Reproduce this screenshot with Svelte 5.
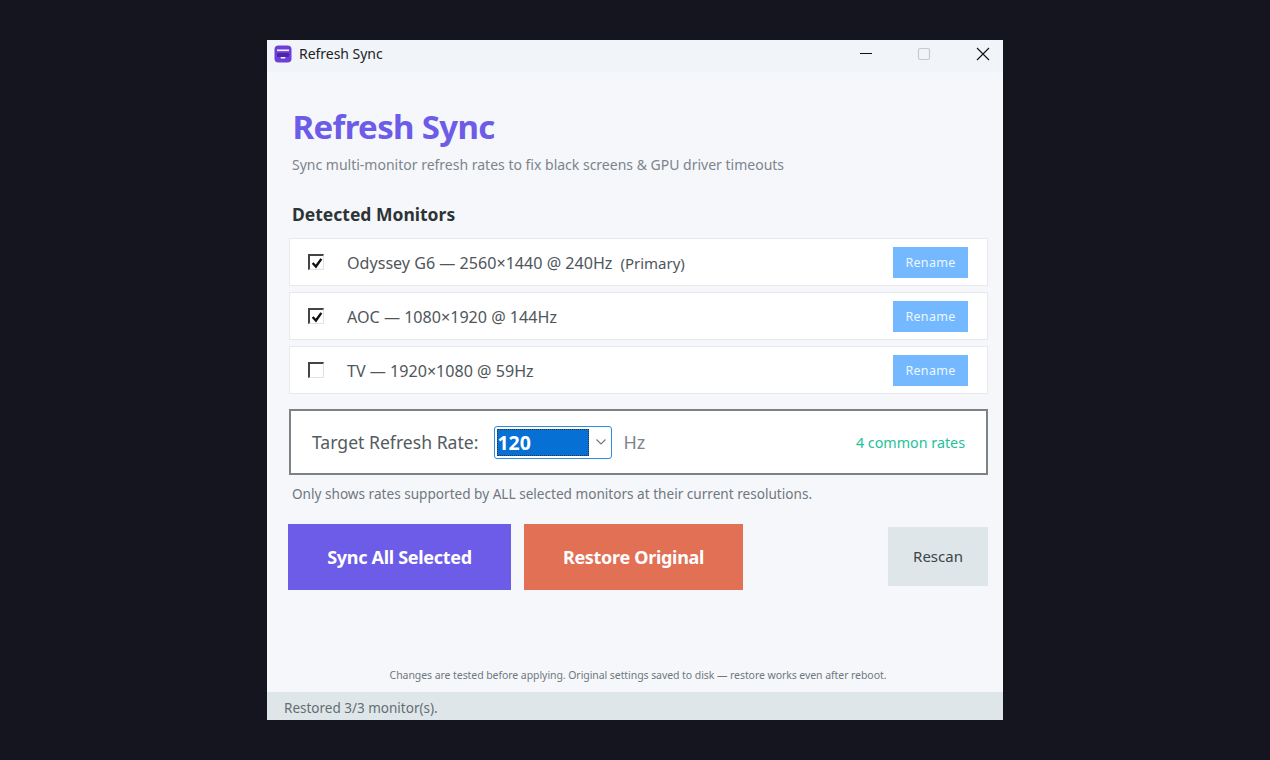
<script>
  const monitors = [
    { label: "Odyssey G6 — 2560×1440 @ 240Hz", note: "(Primary)", checked: true },
    { label: "AOC — 1080×1920 @ 144Hz", checked: true },
    { label: "TV — 1920×1080 @ 59Hz", checked: false },
  ];
</script>

<div class="desktop">
  <div class="window">
    <div class="titlebar">
      <div class="app-icon">
        <svg width="18" height="18" viewBox="0 0 18 18">
          <rect x="0.5" y="0.5" width="17" height="17" rx="4" fill="#6b3fd8" />
          <rect x="3" y="4.5" width="12" height="1.6" fill="#f3effc" />
          <rect x="3" y="8" width="12" height="4" rx="1" fill="#4a25a8" />
          <rect x="6.5" y="12" width="5" height="1.4" rx="0.7" fill="#f3effc" />
        </svg>
      </div>
      <span class="app-title">Refresh Sync</span>
      <div class="win-controls">
        <svg class="min" width="14" height="14" viewBox="0 0 14 14"><path d="M1 6.5h12" stroke="#111" stroke-width="1" /></svg>
        <svg class="max" width="14" height="14" viewBox="0 0 14 14"><rect x="1.5" y="1.5" width="11" height="11" rx="1.5" fill="none" stroke="#c6c9ce" stroke-width="1.2" /></svg>
        <svg class="close" width="14" height="14" viewBox="0 0 14 14"><path d="M1 1l12 12M13 1L1 13" stroke="#111" stroke-width="1.1" /></svg>
      </div>
    </div>

    <div class="content">
      <h1>Refresh Sync</h1>
      <p class="subtitle">Sync multi-monitor refresh rates to fix black screens &amp; GPU driver timeouts</p>

      <h2>Detected Monitors</h2>
      <div class="monitors">
        {#each monitors as m}
          <div class="monitor">
            <span class="check">
              {#if m.checked}
                <svg width="12" height="12" viewBox="0 0 11 11"><path d="M1.5 5.5l3 3.2 5-7" fill="none" stroke="#111" stroke-width="2.2" /></svg>
              {/if}
            </span>
            <span class="monitor-label">{m.label}{#if m.note}<span class="note">{m.note}</span>{/if}</span>
            <button class="rename">Rename</button>
          </div>
        {/each}
      </div>

      <div class="target">
        <span class="target-label">Target Refresh Rate:</span>
        <div class="combo">
          <span class="combo-value">120</span>
          <svg width="12" height="8" viewBox="0 0 12 8"><path d="M1.5 1.5L6 6l4.5-4.5" fill="none" stroke="#777" stroke-width="1.1" /></svg>
        </div>
        <span class="hz">Hz</span>
        <span class="common">4 common rates</span>
      </div>

      <p class="hint">Only shows rates supported by ALL selected monitors at their current resolutions.</p>

      <div class="actions">
        <button class="primary">Sync All Selected</button>
        <button class="restore">Restore Original</button>
        <button class="rescan">Rescan</button>
      </div>

      <p class="footnote">Changes are tested before applying. Original settings saved to disk — restore works even after reboot.</p>
    </div>

    <div class="statusbar">Restored 3/3 monitor(s).</div>
  </div>
</div>

<style>
  :global(body) {
    background: #14151f;
  }

  .desktop {
    height: 760px;
    box-sizing: border-box;
    padding-top: 40px;
    background: #14151f;
    display: flex;
    justify-content: center;
    font-family: "Noto Sans", "Open Sans", sans-serif;
  }

  .window {
    width: 736px;
    height: 680px;
    background: #f5f7fb;
    display: flex;
    flex-direction: column;
  }

  .titlebar {
    height: 32px;
    flex: none;
    background: #f1f4f9;
    display: flex;
    align-items: center;
    padding-left: 7px;
  }
  .app-icon {
    width: 18px;
    height: 18px;
    margin-top: -4px;
  }
  .app-title {
    margin-left: 7px;
    margin-top: -5px;
    font-size: 14px;
    color: #222;
    letter-spacing: -0.03px;
  }
  .win-controls {
    margin-left: auto;
    display: flex;
    gap: 45px;
    padding-right: 13px;
    margin-top: -4px;
  }
  .min {
    margin-left: 1px;
    margin-right: -1px;
  }

  .content {
    flex: 1;
    display: flex;
    flex-direction: column;
    padding: 0 15px 0 21px;
  }

  h1 {
    margin: 32px 0 0 4.5px;
    font-size: 33px;
    line-height: 46px;
    font-weight: 700;
    letter-spacing: -0.65px;
    color: #6c5ce7;
  }
  .subtitle {
    margin: 5px 0 0 4px;
    font-size: 14px;
    line-height: 20px;
    color: #7d848b;
  }
  h2 {
    margin: 27px 0 0 4px;
    font-size: 17.5px;
    line-height: 24px;
    font-weight: 700;
    color: #2d3436;
  }

  .monitors {
    margin-top: 12px;
    margin-left: 1px;
    display: flex;
    flex-direction: column;
    gap: 6px;
  }
  .monitor {
    height: 48px;
    box-sizing: border-box;
    background: #fff;
    border: 1px solid #e7e9ed;
    display: flex;
    align-items: center;
    padding: 0 19px 0 18px;
  }
  .check {
    width: 16px;
    height: 16px;
    box-sizing: border-box;
    background: #fff;
    border: 1px solid #e2e2e2;
    border-top: 2px solid #444;
    border-left: 2px solid #444;
    display: flex;
    align-items: center;
    justify-content: center;
  }
  .monitor-label {
    margin-left: 23px;
    padding-top: 2px;
    font-size: 16.1px;
    color: #4f565b;
    white-space: pre;
  }
  .note {
    margin-left: 8px;
    font-size: 15px;
  }
  .rename {
    margin-left: auto;
    width: 75px;
    height: 31px;
    border: none;
    background: #74b9ff;
    color: #eef6ff;
    font-family: inherit;
    font-size: 12.5px;
    letter-spacing: 0.3px;
    padding: 1px 0 0 0;
  }

  .target {
    margin-top: 15px;
    margin-left: 1px;
    height: 66px;
    box-sizing: border-box;
    background: #fff;
    border: 2px solid #7f8285;
    display: flex;
    align-items: center;
    padding: 0 21px 0 21px;
  }
  .target-label {
    font-size: 17.6px;
    color: #545b60;
  }
  .combo {
    margin-left: 16px;
    width: 118px;
    height: 33px;
    box-sizing: border-box;
    border: 1px solid #2f8be0;
    border-radius: 3px;
    padding: 2px;
    display: flex;
    align-items: center;
    justify-content: space-between;
    padding-right: 4px;
  }
  .combo-value {
    width: 92px;
    height: 27px;
    background: #0670d4;
    outline: 1px dotted #333;
    outline-offset: -1px;
    color: #fff;
    font-size: 19.5px;
    font-weight: 700;
    line-height: 27px;
    box-sizing: border-box;
  }
  .hz {
    margin-left: 11px;
    font-size: 18px;
    color: #7d848b;
  }
  .common {
    margin-left: auto;
    font-size: 14.3px;
    color: #24c19a;
  }

  .hint {
    margin: 9px 0 0 4px;
    font-size: 13.6px;
    line-height: 20px;
    color: #70777d;
  }

  .actions {
    margin-top: 20px;
    display: flex;
    align-items: center;
    gap: 13px;
  }
  .actions button {
    border: none;
    padding: 0;
    font-family: inherit;
  }
  .primary,
  .restore {
    height: 66px;
    color: #fff;
    font-size: 18px;
    font-weight: 700;
    letter-spacing: -0.3px;
  }
  .primary {
    width: 223px;
    background: #6c5ce7;
  }
  .restore {
    width: 219px;
    background: #e17055;
  }
  .rescan {
    margin-left: auto;
    margin-bottom: 2px;
    width: 100px;
    height: 59px;
    background: #dfe6e9;
    color: #3c4448;
    font-size: 15px;
  }

  .footnote {
    margin: auto 0 9px 0;
    text-align: center;
    font-size: 10.5px;
    line-height: 16px;
    color: #70777d;
    letter-spacing: -0.07px;
  }

  .statusbar {
    height: 28px;
    flex: none;
    box-sizing: border-box;
    background: #dfe6e9;
    padding: 6px 0 0 17px;
    font-size: 13.5px;
    line-height: 20px;
    color: #636e72;
  }
</style>
